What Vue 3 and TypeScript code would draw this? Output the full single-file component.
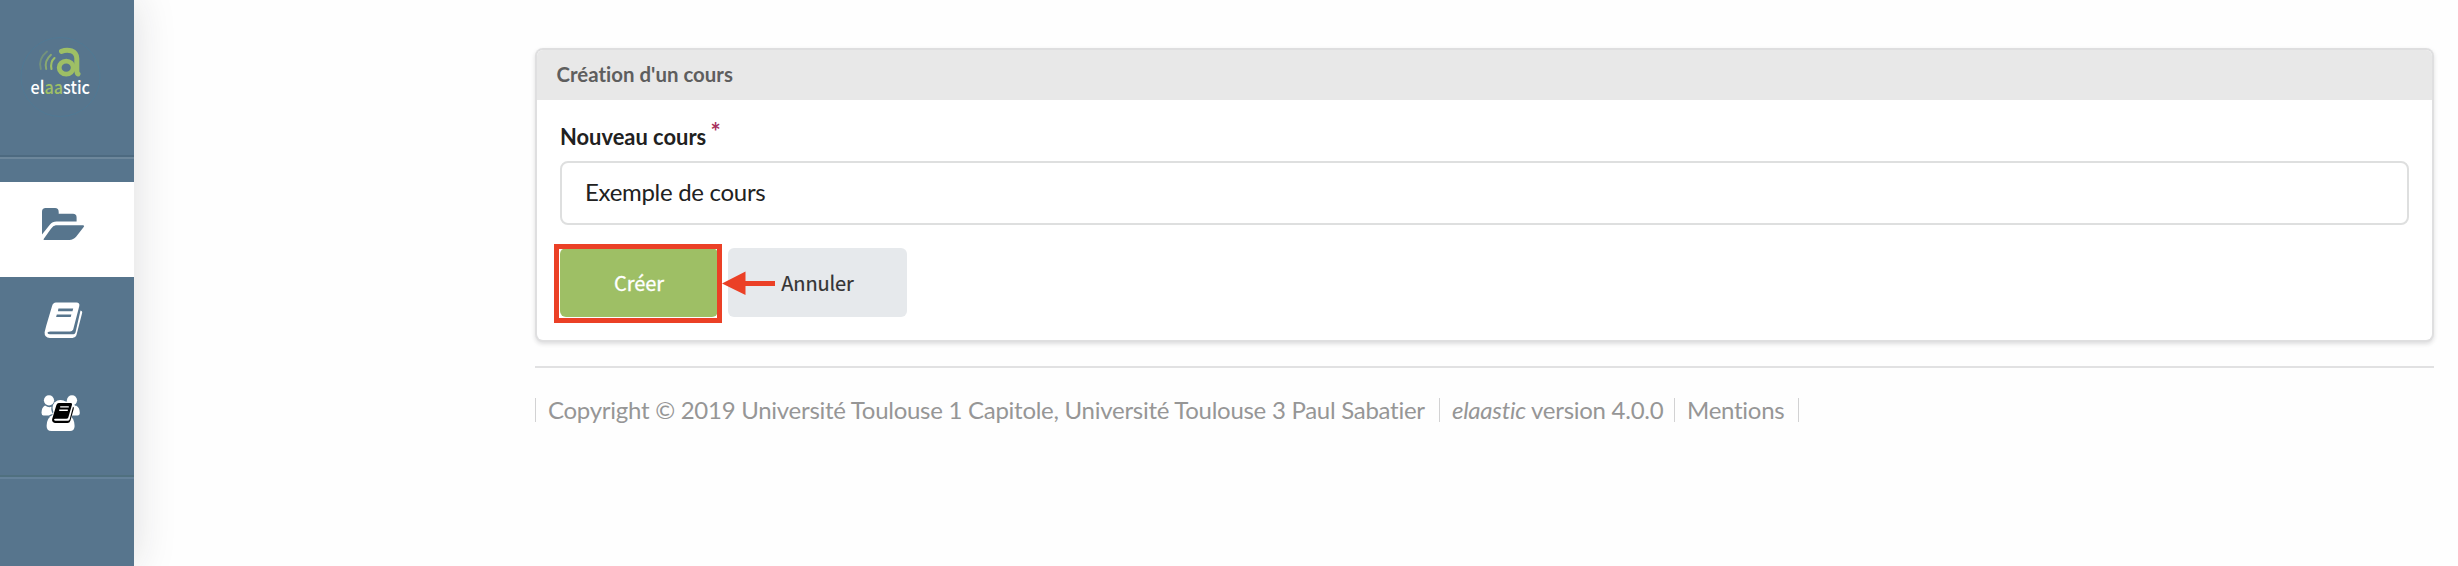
<script setup lang="ts">
import { ref } from 'vue'

const courseTitle = ref<string>('Exemple de cours')
</script>

<template>
  <div class="page">
    <nav class="sidebar">
      <a class="brand">
        <svg width="134" height="155" viewBox="0 0 134 155">
          <circle class="ring" cx="60.5" cy="77" r="39.5" />
          <g class="mark">
            <path d="M61.5 51.3C68 48.8 76.5 50.5 76.8 58.5V69.5Q76.8 73.5 78 74" stroke-width="5" />
            <ellipse cx="66.2" cy="67.7" rx="7" ry="6.5" stroke-width="4.8" />
            <path d="M54.5 58Q50 62 51.5 69" stroke-width="2.1" />
            <path d="M51 54.8Q44 61 46.2 69" stroke-width="2" opacity=".7" />
            <path d="M47 51.5Q37.8 59 40.8 69" stroke-width="1.9" opacity=".4" />
          </g>
          <text x="30.5" y="93.5" textLength="59.5" lengthAdjust="spacingAndGlyphs">el<tspan>aa</tspan>stic</text>
        </svg>
      </a>
      <div class="rule"></div>
      <a class="item active">
        <svg width="134" height="96" viewBox="0 181 134 96">
          <path d="M42 210.7Q42 207 45.7 207H55Q58.7 207 58.7 211V212.8H73Q76.6 212.8 76.6 216.5V220.6H56.5Q52.5 220.6 49.8 223.8L42 233.5Z" />
          <path d="M55.8 224.3H83Q84.9 224.3 83.7 226L76.3 235.6Q73.4 239 69.4 239H44.8Q42.8 239 44 237.4L50.8 228Q53.2 224.6 55.8 224.3Z" />
        </svg>
      </a>
      <a class="item">
        <svg width="134" height="96" viewBox="0 277 134 96">
          <path fill-rule="evenodd" d="M56 302.5H76.5Q80 302.5 79.3 306L73.2 329.5Q72.3 331.5 70 331.5H50.5Q47.2 331.4 47.6 333.2Q48 334.3 50 334.3H73.5Q75 334.3 75.5 332.5L80.5 310.5Q82.8 311 82 313.5L76.4 335.2Q75.4 338 72.5 338H49.8Q44.3 337.5 44.6 332.2Q45.4 329 46.3 325.5L52 306.2Q53 302.5 56 302.5ZM58.4 308.5L57.9 311.2H72.5L73.2 308.5ZM56.8 314.4L56.1 317.1H70.7L71.4 314.4Z" />
        </svg>
      </a>
      <a class="item last">
        <svg width="134" height="103" viewBox="0 373 134 103">
          <circle cx="49" cy="400.3" r="5.1" />
          <circle cx="72" cy="400.3" r="5.1" />
          <circle cx="60.5" cy="408" r="8" />
          <path d="M45 405.5Q48.5 408 51.5 406.8Q50.7 411 53 413.8Q49.5 414.8 49 415.5H43.5Q41.5 415.5 41.5 412.8Q41.5 407.5 45 405.5Z" />
          <path d="M76 405.5Q79.8 407.5 79.8 412.8Q79.8 415.5 77.5 415.5H71L69 412V406.8Q72.5 408 76 405.5Z" />
          <path d="M53.5 414.5H68Q74.6 417.5 74.6 426Q74.6 431 70 431H51.3Q46.6 431 46.6 426Q46.6 417.5 53.5 414.5Z" />
          <path class="outline" d="M58 402.5H71L74 406L69 422.5H53Q51.5 420 53 416Z" />
          <path class="ink" d="M58.8 402.9H70.8Q72.5 402.9 72 404.8L68.3 417.5Q67.9 418.8 66.2 418.8H55.5Q53.8 418.8 54.1 420Q54.4 420.8 55.5 420.8H67.8Q69.2 420.8 69.7 419.3L73 406.8Q74.2 407.3 73.7 409L70.4 420.8Q69.6 423 67.5 423H55Q51.8 422.6 52.1 419.3L56.4 405Q57.1 402.9 58.8 402.9Z" />
          <path class="lines" d="M60.2 406.9H68.8M59.2 410.3H67.8" />
        </svg>
      </a>
      <div class="rule low"></div>
    </nav>

    <main class="content">
      <section class="card">
        <header>Création d'un cours</header>
        <form @submit.prevent>
          <label for="title">Nouveau cours <sup>*</sup></label>
          <input id="title" v-model="courseTitle" type="text" />
          <div class="actions">
            <button class="create" type="submit">Créer</button>
            <button class="cancel" type="button">Annuler</button>
            <svg class="callout" width="222" height="80" viewBox="0 0 222 80">
              <rect x="2.5" y="2.5" width="163" height="74" />
              <path d="M168 39.5L191.5 27.5V37H221V42H191.5V51Z" />
            </svg>
          </div>
        </form>
      </section>
      <footer>
        <span class="copyright">Copyright © 2019 Université Toulouse 1 Capitole, Université Toulouse 3 Paul Sabatier</span>
        <span class="version"><em>elaastic</em> version 4.0.0</span>
        <span class="mentions">Mentions</span>
      </footer>
    </main>
  </div>
</template>

<style>
body {
  margin: 0;
  background: #fefefe;
}
</style>

<style scoped>
.page,
.page * {
  box-sizing: border-box;
}
.page {
  display: flex;
  height: 566px;
  overflow: hidden;
  font-family: Lato, sans-serif;
  font-variant-ligatures: none;
  color: #212121;
}
.sidebar {
  width: 134.4px;
  flex: none;
  background: #57758d;
  box-shadow: 0 0 40px rgba(34, 36, 38, 0.15);
}
.sidebar svg {
  display: block;
  fill: #fff;
}
.brand {
  display: block;
  height: 155px;
}
.ring {
  fill: none;
  stroke: #507994;
  stroke-width: 1;
}
.mark {
  fill: none;
  stroke: #9ebf65;
  stroke-linecap: round;
}
.brand text {
  font: 500 17.5px 'Noto Sans CJK JP', sans-serif;
}
.brand tspan {
  fill: #9ebf65;
}
.rule {
  height: 4px;
  background: linear-gradient(#4d6a80 0 2px, #6d879b 2px);
  margin-bottom: 22.5px;
}
.rule.low {
  background: linear-gradient(#50707f 0 2px, #65829a 2px);
}
.item {
  display: block;
  height: 96px;
}
.item.active {
  height: 95.5px;
  background: #fff;
}
.item.active svg {
  fill: #57758d;
}
.item.last {
  height: 102px;
}
.outline {
  fill: #fff;
  stroke: #fff;
  stroke-width: 2;
}
.ink {
  fill: #000;
}
.lines {
  stroke: #fff;
  stroke-width: 1.4;
}
.content {
  width: 1899px;
  margin: 48px 0 0 400.6px;
  flex: none;
}
.card {
  height: 294px;
  border: 2px solid #dfdfe0;
  border-top-color: #dededf;
  border-radius: 8px;
  background: #fff;
  box-shadow: 0 2px 4px rgba(34, 36, 38, 0.15);
}
.card header {
  height: 50px;
  padding-left: 19.5px;
  background: #e8e8e8;
  border-radius: 6px 6px 0 0;
  color: #5e5e5e;
  font-size: 20.4px;
  letter-spacing: 0.02px;
  font-weight: 700;
  line-height: 49px;
}
form {
  padding: 21px 23px 0;
}
label {
  display: block;
  height: 39.5px;
  font-size: 21.9px;
  font-weight: 700;
  line-height: 32px;
}
sup {
  color: #a8325e;
  font-size: 24px;
  line-height: 0;
  vertical-align: 4px;
  margin-left: -1px;
}
input {
  display: block;
  width: 1849px;
  height: 64px;
  padding: 0 23px 2px;
  border: 2px solid #dedfdf;
  border-radius: 8px;
  background: #fff;
  color: #212121;
  font: 24px Lato, sans-serif;
  letter-spacing: -0.3px;
  outline: none;
}
.actions {
  position: relative;
  display: flex;
  gap: 10px;
  margin-top: 23.5px;
}
button {
  height: 69px;
  padding: 0 0 1px;
  border: 0;
  border-radius: 6px;
  font: 400 20px 'Noto Sans CJK JP', sans-serif;
  letter-spacing: -0.1px;
}
.create {
  width: 158px;
  background: #9ebf65;
  color: #fff;
  -webkit-text-stroke: 0.3px #fff;
}
.cancel {
  width: 179px;
  background: #e6e9ec;
  color: #333;
  -webkit-text-stroke: 0.2px #333;
}
.callout {
  position: absolute;
  left: -6px;
  top: -4px;
  fill: #eb4026;
}
.callout rect {
  fill: none;
  stroke: #eb4026;
  stroke-width: 5;
}
footer {
  display: flex;
  height: 58px;
  margin-top: 24px;
  padding-top: 30px;
  border-top: 2px solid #e1e1e2;
  color: #969696;
  font-size: 24px;
  letter-spacing: -0.27px;
  line-height: 24px;
  white-space: nowrap;
}
footer span {
  height: 24px;
  border-left: 1.5px solid #d2d2d3;
  padding-left: 12px;
}
.copyright {
  width: 904px;
}
.version {
  width: 235px;
}
.mentions {
  width: 125px;
  border-right: 1.5px solid #d2d2d3;
}
</style>
